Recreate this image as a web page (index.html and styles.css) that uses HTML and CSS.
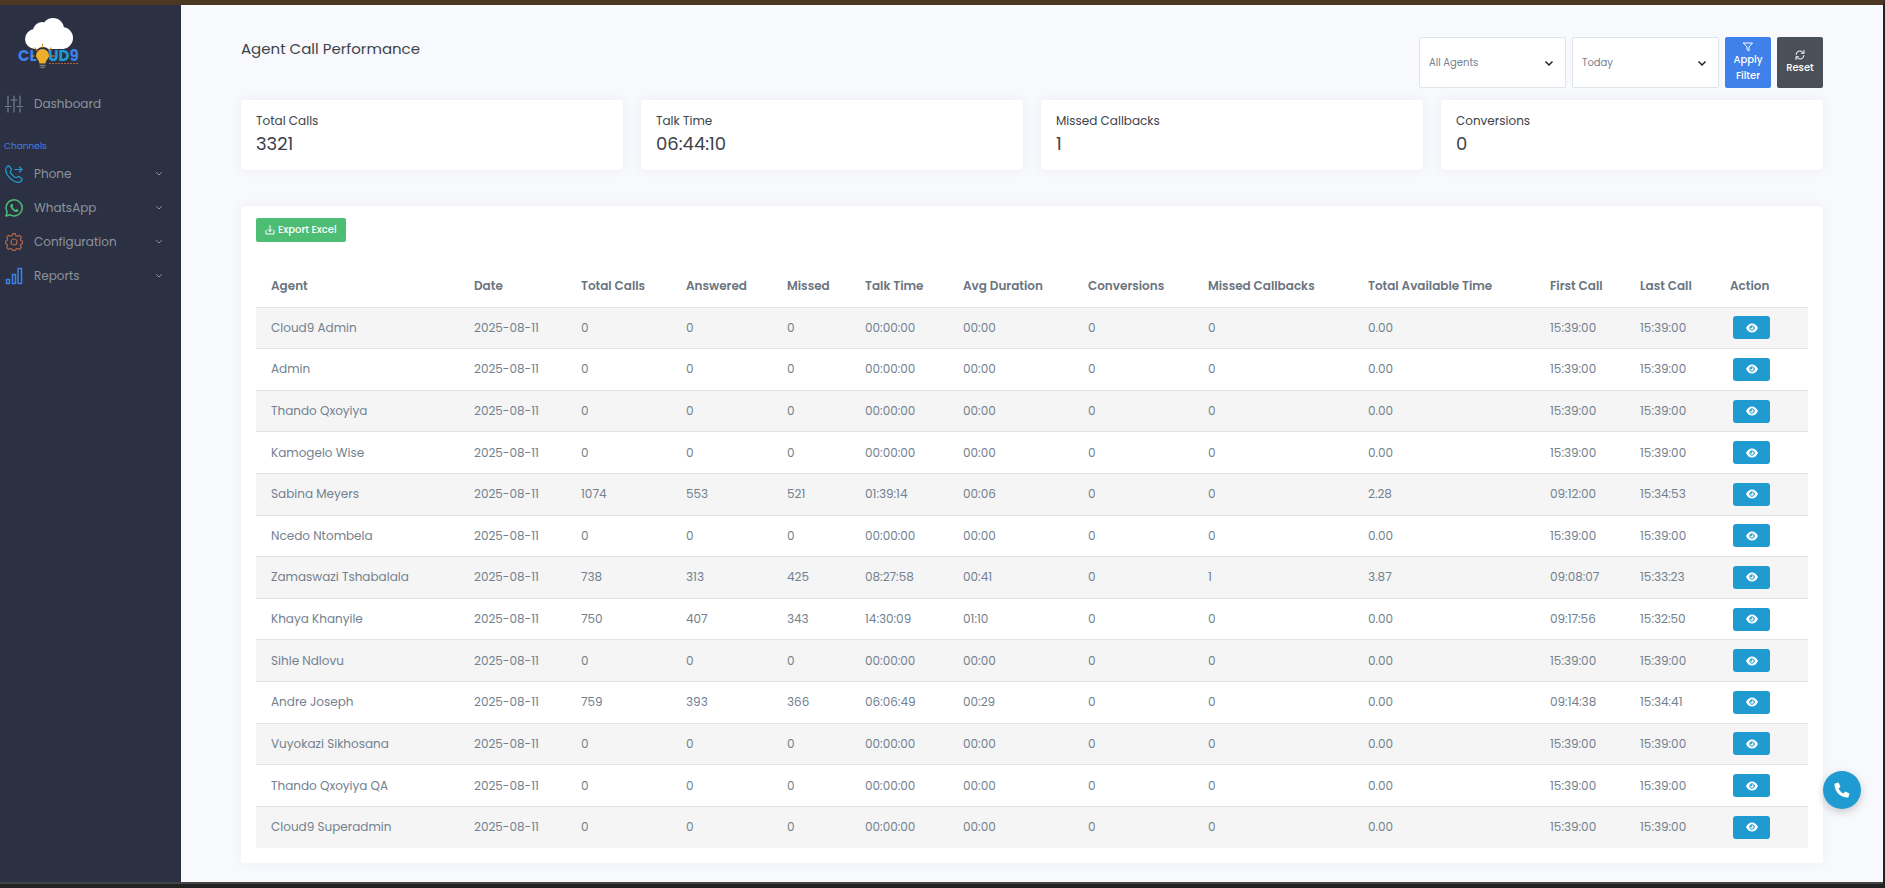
FILE: index.html
```html
<!DOCTYPE html>
<html lang="en">
<head>
    <meta charset="UTF-8">
    <meta name="viewport" content="width=device-width, initial-scale=1.0">
    <title>Agent Call Performance</title>
    <link rel="stylesheet" href="styles.css">
</head>
<body>

<div class="layout">

    <!-- Sidebar -->
    <aside class="sidebar">
        <a href="#" class="logo" aria-label="Cloud9">
            <svg width="64" height="56" viewBox="0 0 64 56">
                <g fill="#fff">
                    <circle cx="17" cy="22" r="10"/>
                    <circle cx="24" cy="14" r="9"/>
                    <circle cx="35" cy="12" r="11"/>
                    <circle cx="44" cy="21" r="11"/>
                    <rect x="16" y="18" width="30" height="14"/>
                </g>
                <circle cx="25" cy="38" r="8" fill="#2b3042"/>
                <g font-size="15" font-weight="700">
                    <text x="0" y="44" fill="#3f80ea">CL</text>
                    <text x="30" y="44" fill="#209bd1">UD<tspan fill="#3f80ea">9</tspan></text>
                </g>
                <path d="M24.500 32a6.500 6.500 0 0 1 6.500 6.500c0 3-3 4-3.500 8h-6c-.500-4-3.500-5-3.500-8a6.500 6.500 0 0 1 6.500-6.500z" fill="#ecae2c"/>
                <path d="M22 48.500h5M23 50.500h3" stroke="#777" stroke-width="1.500"/>
                <path d="M24.500 27v3M17 31l2 2M33 31l-2 2M14 39h2M33 39h3" stroke="#e59a2b" stroke-width="1.200"/>
                <path class="tagline" d="M31 46.500h30"/>
            </svg>
        </a>

        <nav class="menu">
            <a href="#" class="menu-item">
                <svg class="menu-icon gray" viewBox="0 0 18 18"><path d="M3 1v9M3 13v4M0 11.500h6M9 1v3M9 6v11M6 5h6M15 1v9M15 13v4M12 11.500h6"/></svg>
                <span>Dashboard</span>
            </a>
            <h2 class="menu-title">Channels</h2>
            <a href="#" class="menu-item">
                <svg class="menu-icon cyan" viewBox="0 0 18 18"><path d="M4 1C2.500.500.500 3 .700 5c.300 5.500 7 12 12.300 12.300 2 .200 4.500-2 4-3.500L14 11.500c-1-.500-2 1.500-3 1.200C9.300 12.300 5.700 8.800 5.300 7 5.100 6 7 5 6.500 4zM10 4.500h7M14.500 2L17 4.500 14.500 7"/></svg>
                <span>Phone</span>
                <svg class="arrow" viewBox="0 0 8 8"><path d="M1.500 2.500L4 5l2.500-2.500"/></svg>
            </a>
            <a href="#" class="menu-item">
                <svg class="menu-icon green" viewBox="0 0 18 18"><path d="M1 17l1.200-4.200A8 8 0 1 1 5.200 15.800z"/><path class="solid" d="M6.500 5C5 5.500 5 7.500 6 9c1.200 2 3 3.500 5 4 1.500.200 2.500-.800 2.500-2l-2-1-1 1C9.500 10.500 8 9 7.500 8l.800-1-.800-2z"/></svg>
                <span>WhatsApp</span>
                <svg class="arrow" viewBox="0 0 8 8"><path d="M1.500 2.500L4 5l2.500-2.500"/></svg>
            </a>
            <a href="#" class="menu-item">
                <svg class="menu-icon orange" viewBox="0 0 18 18"><circle cx="9" cy="9" r="3"/><path d="M7.700.700h2.600l.700 2 1.500.600 2-.900 1.800 1.800-.900 2 .600 1.500 1.800.700v2l-1.800.700-.600 1.500.900 2-1.800 1.800-2-.900-1.500.600-.700 1.200H7.700l-.700-1.200-1.500-.600-2 .900-1.800-1.800.900-2L2 11.100l-1.800-.700v-2L2 7.700l.600-1.500-.900-2 1.800-1.800 2 .900L7 2.700z"/></svg>
                <span>Configuration</span>
                <svg class="arrow" viewBox="0 0 8 8"><path d="M1.500 2.500L4 5l2.500-2.500"/></svg>
            </a>
            <a href="#" class="menu-item">
                <svg class="menu-icon blue" viewBox="0 0 18 18"><path d="M1.500 12.500h3v4h-3zM7.500 7.500h3v9h-3zM13 1.500h3.500v15H13z"/></svg>
                <span>Reports</span>
                <svg class="arrow" viewBox="0 0 8 8"><path d="M1.500 2.500L4 5l2.500-2.500"/></svg>
            </a>
        </nav>
    </aside>

    <!-- Main content -->
    <main class="content">
        <div class="page-header">
            <h1>Agent Call Performance</h1>
            <form class="filters">
                <select id="agent" name="agent" aria-label="Agent">
                    <option>All Agents</option>
                </select>
                <select id="period" name="period" aria-label="Period">
                    <option>Today</option>
                </select>
                <button type="button" class="btn btn-apply">
                    <svg width="10" height="10" viewBox="0 0 10 10"><path d="M.500 1h9L6 5v4L4 7.500V5z"/></svg>
                    Apply Filter
                </button>
                <button type="reset" class="btn btn-reset">
                    <svg width="10" height="10" viewBox="0 0 10 10"><path d="M1 4.500A4 4 0 0 1 8.500 3M9 .500V3.200H6.500M9 5.500A4 4 0 0 1 1.500 7M1 9.500V6.800h2.500"/></svg>
                    Reset
                </button>
            </form>
        </div>

        <div class="stats">
            <div class="card stat"><h3>Total Calls</h3><p>3321</p></div>
            <div class="card stat"><h3>Talk Time</h3><p>06:44:10</p></div>
            <div class="card stat"><h3>Missed Callbacks</h3><p>1</p></div>
            <div class="card stat"><h3>Conversions</h3><p>0</p></div>
        </div>

        <div class="card report">
            <button type="button" class="btn btn-export">
                <svg width="10" height="10" viewBox="0 0 10 10"><path d="M5 .500v6M3 4.500l2 2 2-2M1 5.500v3.500h8V5.500"/></svg>
                Export Excel
            </button>

            <table>
                <colgroup>
                    <col class="w-agent"><col class="w-date"><col class="w-total"><col class="w-answered"><col class="w-missed"><col class="w-talk"><col class="w-duration"><col class="w-conversions"><col class="w-callbacks"><col class="w-available"><col class="w-time"><col class="w-time"><col class="w-action">
                </colgroup>
                <thead>
                    <tr>
                        <th>Agent</th>
                        <th>Date</th>
                        <th>Total Calls</th>
                        <th>Answered</th>
                        <th>Missed</th>
                        <th>Talk Time</th>
                        <th>Avg Duration</th>
                        <th>Conversions</th>
                        <th>Missed Callbacks</th>
                        <th>Total Available Time</th>
                        <th>First Call</th>
                        <th>Last Call</th>
                        <th>Action</th>
                    </tr>
                </thead>
                <tbody id="agentRows"></tbody>
            </table>
        </div>
    </main>
</div>

<button type="button" class="dialer" aria-label="Open dialer">
    <svg width="16" height="16" viewBox="0 0 16 16"><path d="M1 1.500L4.500.500l2 4.200-2 1.700c1 2.200 2.900 4.100 5.100 5.100l1.700-2 4.200 2-1 3.500c-.100.400-.500.500-.900.500C6.500 15.500.500 9.500.500 2.400c0-.400.100-.800.500-.900z"/></svg>
</button>

<script>
    // name, total calls, answered, missed, talk time, avg, conversions, callbacks, available, first, last
    const agents = [
        ['Cloud9 Admin', 0, 0, 0, '00:00:00', '00:00', 0, 0, '0.00', '15:39:00', '15:39:00'],
        ['Admin', 0, 0, 0, '00:00:00', '00:00', 0, 0, '0.00', '15:39:00', '15:39:00'],
        ['Thando Qxoyiya', 0, 0, 0, '00:00:00', '00:00', 0, 0, '0.00', '15:39:00', '15:39:00'],
        ['Kamogelo Wise', 0, 0, 0, '00:00:00', '00:00', 0, 0, '0.00', '15:39:00', '15:39:00'],
        ['Sabina Meyers', 1074, 553, 521, '01:39:14', '00:06', 0, 0, '2.28', '09:12:00', '15:34:53'],
        ['Ncedo Ntombela', 0, 0, 0, '00:00:00', '00:00', 0, 0, '0.00', '15:39:00', '15:39:00'],
        ['Zamaswazi Tshabalala', 738, 313, 425, '08:27:58', '00:41', 0, 1, '3.87', '09:08:07', '15:33:23'],
        ['Khaya Khanyile', 750, 407, 343, '14:30:09', '01:10', 0, 0, '0.00', '09:17:56', '15:32:50'],
        ['Sihle Ndlovu', 0, 0, 0, '00:00:00', '00:00', 0, 0, '0.00', '15:39:00', '15:39:00'],
        ['Andre Joseph', 759, 393, 366, '06:06:49', '00:29', 0, 0, '0.00', '09:14:38', '15:34:41'],
        ['Vuyokazi Sikhosana', 0, 0, 0, '00:00:00', '00:00', 0, 0, '0.00', '15:39:00', '15:39:00'],
        ['Thando Qxoyiya QA', 0, 0, 0, '00:00:00', '00:00', 0, 0, '0.00', '15:39:00', '15:39:00'],
        ['Cloud9 Superadmin', 0, 0, 0, '00:00:00', '00:00', 0, 0, '0.00', '15:39:00', '15:39:00']
    ];

    const viewButton = `<button type="button" class="btn-view" aria-label="View">
        <svg width="12" height="10" viewBox="0 0 12 10"><path fill="#fff" d="M0 5C1.500 2 3.500.500 6 .500S10.500 2 12 5c-1.500 3-3.500 4.500-6 4.500S1.500 8 0 5z"/><circle cx="6" cy="5" r="2.300" fill="#fff" stroke="#209bd1"/><circle cx="5.300" cy="4.300" r="1" fill="#209bd1"/></svg>
    </button>`;

    document.getElementById('agentRows').innerHTML = agents.map(([name, ...values]) => `
        <tr>
            <td>${name}</td>
            <td>2025-08-11</td>
            ${values.map(value => `<td>${value}</td>`).join('')}
            <td>${viewButton}</td>
        </tr>`).join('');
</script>

</body>
</html>
```
FILE: styles.css
```css
* {
    box-sizing: border-box;
}

body {
    font-family: Poppins, Inter, sans-serif;
    font-size: 12px;
    color: #73818f;
    background-color: #f8f9fd;
    margin: 0;
    border-top: 5px solid #4b3722;
    border-right: 2px solid #222;
    border-bottom: 4px solid #222;
}

h1, h2, h3, p {
    margin: 0;
    font-weight: 400;
}

button, select {
    font-family: inherit;
}

svg {
    fill: none;
    stroke-linecap: round;
    stroke-linejoin: round;
}

.layout {
    display: flex;
    min-height: calc(100vh - 9px);
    border-bottom: 2px solid #444;
}

/* Sidebar */
.sidebar {
    width: 181px;
    flex-shrink: 0;
    background-color: #2b3042;
}

.logo {
    display: block;
    height: 82px;
    padding: 12px 18px;
}

.tagline {
    stroke: #a8633e;
    stroke-width: 1;
    stroke-dasharray: 2 1;
    stroke-linecap: butt;
}

.menu-item {
    display: flex;
    align-items: center;
    gap: 11px;
    height: 34px;
    padding: 0 18px 0 5px;
    color: #8b949f;
    text-decoration: none;
}

.menu-title {
    height: 32px;
    padding: 18px 4px 0;
    color: #3f80ea;
    font-size: 9px;
    line-height: 14px;
}

.menu-title + .menu-item {
    margin-top: 4px;
}

.menu-icon {
    width: 18px;
    height: 18px;
    stroke: currentColor;
    stroke-width: 1.2;
}

.gray { color: #73818f; }
.cyan { color: #209bd1; }
.green { color: #4dbd74; }
.orange { color: #b2664a; }
.blue { color: #3f80ea; }

.green, .blue {
    stroke-width: 1.5;
}

.solid {
    fill: currentColor;
    stroke: none;
}

.arrow {
    width: 8px;
    height: 8px;
    margin-left: auto;
    stroke: #8b949f;
}

/* Main content */
.content {
    flex: 1;
    min-width: 0;
    padding: 32px 60px 19px;
}

.page-header {
    display: flex;
    justify-content: space-between;
    margin-bottom: 12px;
}

.page-header h1 {
    color: #3d434a;
    font-size: 15px;
    line-height: 24px;
}

.filters {
    display: flex;
    gap: 6px;
    height: 51px;
}

.filters select {
    width: 147px;
    padding: 0 9px;
    appearance: none;
    border: 1px solid #dfe3ec;
    border-radius: 2px;
    color: #73818f;
    font-size: 10px;
    background: #fff url("data:image/svg+xml,%3Csvg xmlns='http://www.w3.org/2000/svg' viewBox='0 0 10 10'%3E%3Cpath d='M1.500 3.500L5 7l3.500-3.500' fill='none' stroke='%23222' stroke-width='1.500'/%3E%3C/svg%3E") no-repeat right 11px center / 10px;
}

.btn {
    border: 0;
    border-radius: 2px;
    color: #fff;
    font-size: 10px;
    font-weight: 500;
    cursor: pointer;
}

.btn svg {
    stroke: #fff;
}

.filters .btn {
    display: flex;
    flex-direction: column;
    align-items: center;
    justify-content: center;
    width: 46px;
    padding: 0 4px;
    line-height: 16px;
}

.btn-apply {
    background-color: #3f80ea;
}

.btn-reset {
    background-color: #495057;
}

.btn-export {
    display: flex;
    align-items: center;
    gap: 3px;
    height: 24px;
    padding: 0 9px;
    background-color: #4dbd74;
}

.card {
    background-color: #fff;
    border-radius: 3px;
    box-shadow: 0 0 12px rgba(60, 70, 100, 0.06);
}

.stats {
    display: grid;
    grid-template-columns: repeat(4, 1fr);
    gap: 18px;
    margin-bottom: 36px;
}

.stat {
    height: 70px;
    padding: 12px 15px;
    color: #3d434a;
}

.stat h3 {
    font-size: 12px;
    line-height: 18px;
}

.stat p {
    font-size: 18px;
    line-height: 28px;
}

.report {
    padding: 12px 15px 15px;
}

/* Agents table */
table {
    table-layout: fixed;
    width: 100%;
    height: 582px;
    margin-top: 24px;
    border-collapse: collapse;
}

.w-agent { width: 203px; }
.w-date { width: 107px; }
.w-total { width: 105px; }
.w-answered { width: 101px; }
.w-missed { width: 78px; }
.w-talk { width: 98px; }
.w-duration { width: 125px; }
.w-conversions { width: 120px; }
.w-callbacks { width: 160px; }
.w-available { width: 182px; }
.w-time { width: 90px; }
.w-action { width: 93px; }

th, td {
    height: 41px;
    padding: 0 15px;
    text-align: left;
    white-space: nowrap;
}

th {
    font-weight: 600;
    color: #6b757f;
}

td {
    border-top: 1px solid #dde3ea;
}

tbody tr:nth-child(odd) {
    background-color: #f5f5f5;
}

.btn-view {
    display: flex;
    align-items: center;
    justify-content: center;
    width: 37px;
    height: 23px;
    margin-left: 3px;
    padding: 0;
    border: 0;
    border-radius: 3px;
    background-color: #209bd1;
    cursor: pointer;
}

/* Floating dialer button */
.dialer {
    position: fixed;
    right: 24px;
    bottom: 79px;
    display: flex;
    align-items: center;
    justify-content: center;
    width: 38px;
    height: 38px;
    padding: 0;
    border: 0;
    border-radius: 50%;
    background-color: #209bd1;
    box-shadow: 0 3px 8px rgba(0, 0, 0, 0.2);
    cursor: pointer;
}

.dialer svg {
    fill: #fff;
}
```
